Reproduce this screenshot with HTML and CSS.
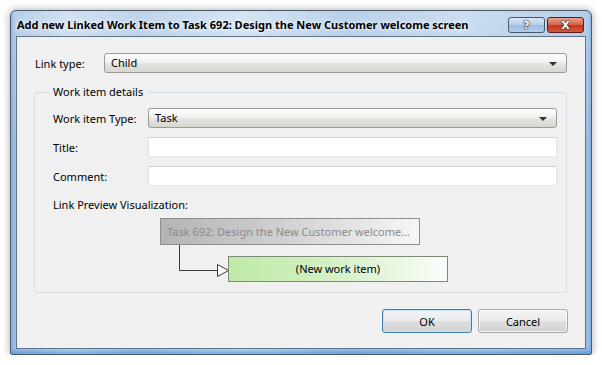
FILE: index.html
```html
<!DOCTYPE html>
<html lang="en">
<head>
    <meta charset="UTF-8">
    <title>Add new Linked Work Item</title>
    <link rel="stylesheet" href="styles.css">
</head>
<body>
    <div class="window">
        <div class="titlebar">
            <span class="title">Add new Linked Work Item to Task 692: Design the New Customer welcome screen</span>
            <div class="caption-buttons">
                <button class="cap-btn help">?</button>
                <button class="cap-btn close">X</button>
            </div>
        </div>

        <div class="client">
            <div class="link-row">
                <label class="link-label">Link type:</label>
                <div class="combo">Child<span class="arrow"></span></div>
            </div>

            <fieldset class="group">
                <legend>Work item details</legend>
                <div class="form-grid">
                    <label>Work item Type:</label>
                    <div class="combo">Task<span class="arrow"></span></div>
                    <label>Title:</label>
                    <div class="textbox"></div>
                    <label>Comment:</label>
                    <div class="textbox"></div>
                </div>

                <div class="preview-label">Link Preview Visualization:</div>

                <!-- link diagram: parent task and the new child item -->
                <div class="diagram">
                    <svg class="connector" width="200" height="66" viewBox="0 0 200 66">
                        <path d="M126.5 28 V53.5 H164" fill="none" stroke="#3a3a3a" stroke-width="1"/>
                        <polygon points="164.5,47.5 175.5,53.5 164.5,59.5" fill="#fff" stroke="#3a3a3a" stroke-width="1"/>
                    </svg>
                    <div class="node parent">Task 692: Design the New Customer welcome...</div>
                    <div class="node child">(New work item)</div>
                </div>
            </fieldset>

            <div class="actions">
                <button class="btn default">OK</button>
                <button class="btn">Cancel</button>
            </div>
        </div>
    </div>
</body>
</html>
```

FILE: styles.css
```css
* {
    margin: 0;
    padding: 0;
    box-sizing: border-box;
}

body {
    background: #fff;
    font-family: "Noto Sans", "Open Sans", sans-serif;
    font-size: 11px;
    color: #000;
}

.window {
    margin: 10px 0 0 10px;
    width: 582px;
    height: 345px;
    padding: 0 5px 5px 5px;
    border: 1px solid #4d5a68;
    border-radius: 6px 6px 2px 2px;
    background:
        linear-gradient(180deg, rgba(255,255,255,0.25) 0%, rgba(255,255,255,0) 40%),
        linear-gradient(90deg, #9dbde2 0%, #c3d8ef 10%, #a9c6e6 22%, #c7dcf1 40%, #a3c2e5 58%, #bad2ec 78%, #9fbfe3 100%);
    box-shadow: 0 0 9px rgba(0,0,0,0.35), inset 0 -3px 4px rgba(40,130,220,0.55);
}

.titlebar {
    height: 25px;
    display: flex;
    align-items: flex-start;
    justify-content: space-between;
}

.title {
    padding: 6px 0 0 1px;
    font-weight: bold;
    font-size: 11px;
    line-height: 16px;
    color: #000;
    text-shadow: 0 0 6px rgba(255,255,255,0.9), 0 0 3px rgba(255,255,255,0.8);
    white-space: nowrap;
}

.caption-buttons {
    display: flex;
    gap: 2px;
    margin: 6px 2px 0 0;
}

.cap-btn {
    width: 37px;
    height: 16px;
    border: 1px solid #47596d;
    border-radius: 3px;
    font-family: "DejaVu Sans", sans-serif;
    font-weight: bold;
    font-size: 11px;
    line-height: 13px;
    color: #fff;
    text-shadow: 0 0 1px #222, 0 0 1px #222, 0 0 2px #333;
}

.cap-btn.help {
    background: linear-gradient(180deg, #d5e4f4 0%, #b8cfe9 48%, #9dbbe0 52%, #b4cdea 100%);
}

.cap-btn.close {
    background: linear-gradient(180deg, #e6a393 0%, #d5644b 48%, #c4371e 52%, #d05a3d 100%);
    border-color: #5c1e14;
}

.client {
    height: 313px;
    background: #f0f0f0;
    border: 1px solid #5f7286;
    padding: 16px 18px 0 18px;
}

.link-row {
    display: flex;
    align-items: center;
}

.link-label {
    width: 69px;
}

.combo {
    position: relative;
    flex: 1;
    height: 20px;
    line-height: 18px;
    padding-left: 6px;
    border: 1px solid #9a9a9a;
    border-radius: 3px;
    background: linear-gradient(180deg, #fdfdfd 0%, #f2f2f0 45%, #e4e3de 55%, #d7d6cf 100%);
}

.arrow {
    position: absolute;
    right: 9px;
    top: 8px;
    border-left: 4px solid transparent;
    border-right: 4px solid transparent;
    border-top: 4px solid #333;
}

.group {
    margin: 11px 0 0 -1px;
    border: 1px solid #d5dfe5;
    border-radius: 3px;
    padding: 8px 9px 9px 18px;
}

.group legend {
    margin-left: -4px;
    padding: 0 3px;
    line-height: 16px;
    border: 1px solid #e6eef3;
    border-width: 0 1px;
}

.form-grid {
    display: grid;
    grid-template-columns: 95px 1fr;
    grid-auto-rows: 20px;
    row-gap: 9px;
    align-items: center;
}

.form-grid .combo {
    height: 20px;
}

.textbox {
    height: 20px;
    background: #fff;
    border: 1px solid;
    border-color: #d2d2d2 #e2e2e2 #e8e8e8 #e2e2e2;
}

.preview-label {
    margin-top: 11px;
    line-height: 15px;
}

.diagram {
    position: relative;
    height: 66px;
    margin-top: 5px;
}

.connector {
    position: absolute;
    left: 0;
    top: 0;
}

.node {
    position: absolute;
    border: 1px solid #8e8e8e;
    text-align: center;
    white-space: nowrap;
    overflow: hidden;
}

.node.parent {
    left: 107px;
    top: 1px;
    width: 260px;
    height: 27px;
    line-height: 25px;
    padding-left: 6px;
    text-align: left;
    color: #8a8a8a;
    background: linear-gradient(90deg, #b4b4b4 0%, #cfcfcf 45%, #f6f6f6 100%);
}

.node.child {
    left: 175px;
    top: 39px;
    width: 220px;
    height: 26px;
    line-height: 24px;
    border-color: #7d8a78;
    background: linear-gradient(90deg, #bfeaa8 0%, #d3f0c3 45%, #fbfdfa 100%);
}

.actions {
    display: flex;
    justify-content: flex-end;
    gap: 6px;
    margin: 16px -1px 0 0;
}

.btn {
    width: 90px;
    height: 24px;
    font-family: inherit;
    font-size: 11px;
    color: #000;
    border: 1px solid #a8a8a8;
    border-radius: 3px;
    background: linear-gradient(180deg, #f3f3f3 0%, #ececec 48%, #dedede 52%, #d3d3d3 100%);
    box-shadow: inset 0 0 0 1px rgba(255,255,255,0.7);
}

.btn.default {
    border-color: #3c7fb1;
    box-shadow: inset 0 0 0 1px #bfe6f8;
}
```
